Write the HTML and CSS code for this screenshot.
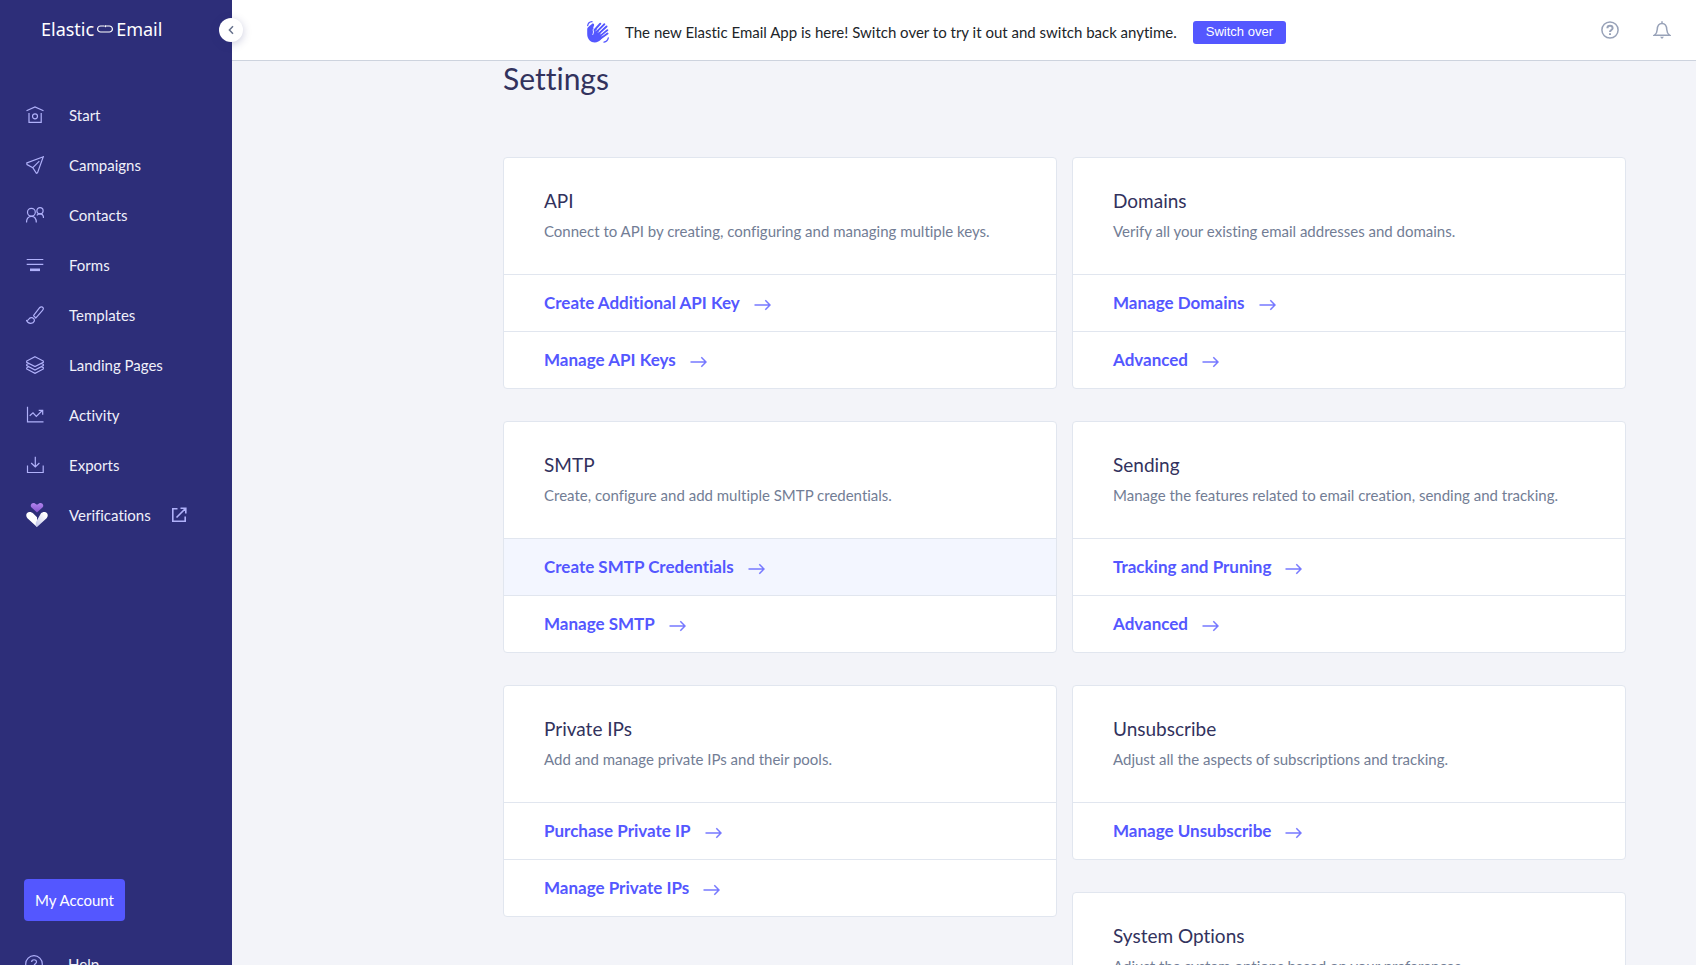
FILE: index.html
```html
<!DOCTYPE html>
<html lang="en">
<head>
<meta charset="utf-8">
<title>Settings - Elastic Email</title>
<link rel="stylesheet" href="styles.css">
</head>
<body>
<svg class="sprite" aria-hidden="true">
  <symbol id="arrow" viewBox="0 0 17 12"><path d="M.5 6h15.500M11.300 1.200 16 6l-4.700 4.800"/></symbol>
</svg>
<div class="app">
  <aside class="sidebar">
    <a class="logo" href="#" aria-label="Elastic Email">
      <span>Elastic</span>
      <svg width="16" height="8" viewBox="0 0 16 8" fill="none" stroke="currentColor" stroke-width="1.200"><path d="M7 1H3.600a3 3 0 0 0 0 6h8.800a3 3 0 0 0 0-6H9"/><path d="M9 0v2.400L6.800 1z" fill="currentColor" stroke="none"/></svg>
      <span>Email</span>
    </a>
    <button class="collapse" type="button" aria-label="Collapse menu"><svg width="6" height="10" viewBox="0 0 6 10" fill="none" stroke="currentColor" stroke-width="1.500"><path d="M5 1.200 1.400 5 5 8.800"/></svg></button>
    <nav class="nav">
      <a href="#"><svg class="icon" viewBox="0 0 18 18"><path d="M.5 4.800 9 1l8.500 3.800M3 7v9.300h12.200V7"/><circle cx="9" cy="10.300" r="2.500"/></svg>Start</a>
      <a href="#"><svg class="icon" viewBox="0 0 18 18"><path d="M17.300.7.800 7l.2 1.500 5.800 3.200 3.600 5.600 1.100-.4zM6.800 11.700l6.500-6.500"/></svg>Campaigns</a>
      <a href="#"><svg class="icon" viewBox="0 0 18 18"><circle cx="5.400" cy="6.300" r="3.900"/><path d="M.5 16.500c0-4 2-6.200 4.900-6.200s4.900 2.200 4.900 6.200"/><circle cx="14" cy="4.700" r="3.100"/><path d="M10.800 9.400c.8-1.100 1.900-1.600 3.200-1.600 2.400 0 3.500 1.700 3.500 4.200"/></svg>Contacts</a>
      <a href="#"><svg class="icon" viewBox="0 0 18 18"><path d="M.7 3.500h16.600M.7 8.300h16.600"/><path d="M4 13.800h10" stroke-width="2.600"/></svg>Forms</a>
      <a href="#"><svg class="icon" viewBox="0 0 18 18"><path d="M7.300 9.800 13.800 1.500c1-1.200 3.300-.8 3.600 1-.1.700-.3 1.300-.9 1.900L9.500 12.300M7.300 9.800c1.200.4 1.900 1.200 2.200 2.500"/><path d="M.6 14.500c2.400.2 1.800-2.600 4.500-2.900 2.200-.2 3.800 1.800 3.100 3.700-1 2.800-6.200 3-7.600-.8z"/></svg>Templates</a>
      <a href="#"><svg class="icon" viewBox="0 0 18 18"><path d="M9 .7 17.300 5v1.300L9 10.600.7 6.300V5zM.7 8.300v1.300L9 14l8.300-4.400V8.300L15.500 7.500M2.500 7.500.7 8.300M.7 11.700V13L9 17.400l8.300-4.400v-1.300l-1.800-.9M2.500 10.800l-1.800.9"/></svg>Landing Pages</a>
      <a href="#"><svg class="icon" viewBox="0 0 18 18"><path d="M1.500.8v15h16M3.700 9.800l3.300-3 3.300 3.700 6-6M12.700 4.300h4v4.500"/></svg>Activity</a>
      <a href="#"><svg class="icon" viewBox="0 0 18 18"><path d="M1.500 9.500v7h15.700v-7M9.300.8v10M5.200 7l4.100 4 4.100-4"/></svg>Exports</a>
      <a href="#"><svg class="verify" viewBox="0 0 22 24"><defs><linearGradient id="heartPurple" x1="0" y1="0" x2="0" y2="1"><stop offset="0" stop-color="#b184ee"/><stop offset="1" stop-color="#8454cc"/></linearGradient><linearGradient id="leafShade" x1="0" y1="1" x2="1" y2="0"><stop offset="0" stop-color="#bfc3ea"/><stop offset=".8" stop-color="#fff"/></linearGradient></defs><path d="M11 9.500 5.300 4.200C3.500 2 6.200-1 9 .4l2 1.300 2-1.300c2.800-1.400 5.500 1.600 3.700 3.800z" fill="url(#heartPurple)"/><path d="M11 24 1.400 15.200C-.6 13 0 9.500 3 9c1.700-.3 3 .3 4 1.300l4 4z" fill="#fff"/><path d="M11 24c-1.500-1.500-1.800-4-.5-6l4.500-7.700c1-1 2.300-1.600 4-1.300 3 .5 3.600 4 1.600 6.200z" fill="url(#leafShade)"/></svg>Verifications<svg class="external" viewBox="0 0 16 16"><path d="M6.500 1.800H1.800v12.400h12.400V9.500M9.500 1.200h5.300v5.300M14.500 1.500 5.500 10.500"/></svg></a>
    </nav>
    <div class="account">
      <button class="account-button" type="button">My Account</button>
      <a class="help" href="#"><svg class="icon" viewBox="0 0 18 18"><circle cx="9" cy="9" r="8.300"/><path d="M6.600 7c0-3 4.900-3 4.900 0 0 1.700-2.500 1.800-2.500 4M9 12.500V14"/></svg>Help</a>
    </div>
  </aside>

  <div class="page">
    <header class="topbar">
      <div class="banner">
        <svg width="22" height="22" viewBox="0 0 22 22" fill="none" stroke="#5457ff" stroke-linecap="round"><path d="M.2 13V8.500C.2 7 .8 6.300 1.800 5.400L4.900 2.900C6.300 2 7.700 3.400 6.900 4.800L6 7.500l2.500-.5 7.500 7.500-1.500 3.300C9.500 24.500.2 21.500.2 13z" fill="#5457ff" stroke="none"/><path d="M8 8.500 13.300 2.700M9.500 11l7.800-7.800M11.500 13l8-7.500M13.500 15l6.800-5.800M13.500 17.500l7-5" stroke-width="2"/><path d="m8.700 10 7.300-7.300M11.200 11.500l7-7M13.200 13.200l6.700-5.900M14.800 15l5.700-4.400" stroke="#fff" stroke-width=".6"/><path d="M5.800 13.500c1-2 .8-3.200.2-4.600L7.500 7" stroke="#fff" stroke-width=".9"/><path d="M.7 4.500C1 2.500 2.500 1 5 .7M17 21.200c2.200-.4 3.800-1.800 4.300-4.300" stroke-width="1.300"/></svg>
        <span>The new Elastic Email App is here! Switch over to try it out and switch back anytime.</span>
        <button class="switch" type="button">Switch over</button>
      </div>
      <div class="tools">
        <button type="button" aria-label="Help"><svg width="18" height="18" viewBox="0 0 18 18" fill="none" stroke="currentColor" stroke-width="1.500"><circle cx="9" cy="9" r="8.100"/><path d="M6.400 7.200c0-3.200 5.200-3.200 5.200 0C11.600 9 9 9 9 11M9 12.200V14" stroke-width="2"/></svg></button>
        <button type="button" aria-label="Notifications"><svg width="18" height="18" viewBox="0 0 18 18" fill="none" stroke="currentColor" stroke-width="1.500"><path d="M1.500 14.200h15c-2-1.300-2.500-2.500-2.700-5.500C13.600 4.500 12 2.500 9 2.500S4.400 4.500 4.200 8.700c-.2 3-.7 4.200-2.700 5.500zM9 .3v2"/><path d="M7 15.800h4L9 18z" fill="currentColor" stroke="none"/></svg></button>
      </div>
    </header>
    <main class="content">
      <h1>Settings</h1>
      <div class="columns">
        <div class="column">
          <section class="card">
            <div class="card-head"><h2>API</h2><p>Connect to API by creating, configuring and managing multiple keys.</p></div>
            <a href="#">Create Additional API Key<svg class="arrow"><use href="#arrow"/></svg></a>
            <a href="#">Manage API Keys<svg class="arrow"><use href="#arrow"/></svg></a>
          </section>
          <section class="card">
            <div class="card-head"><h2>SMTP</h2><p>Create, configure and add multiple SMTP credentials.</p></div>
            <a class="active" href="#">Create SMTP Credentials<svg class="arrow"><use href="#arrow"/></svg></a>
            <a href="#">Manage SMTP<svg class="arrow"><use href="#arrow"/></svg></a>
          </section>
          <section class="card">
            <div class="card-head"><h2>Private IPs</h2><p>Add and manage private IPs and their pools.</p></div>
            <a href="#">Purchase Private IP<svg class="arrow"><use href="#arrow"/></svg></a>
            <a href="#">Manage Private IPs<svg class="arrow"><use href="#arrow"/></svg></a>
          </section>
        </div>
        <div class="column">
          <section class="card">
            <div class="card-head"><h2>Domains</h2><p>Verify all your existing email addresses and domains.</p></div>
            <a href="#">Manage Domains<svg class="arrow"><use href="#arrow"/></svg></a>
            <a href="#">Advanced<svg class="arrow"><use href="#arrow"/></svg></a>
          </section>
          <section class="card">
            <div class="card-head"><h2>Sending</h2><p>Manage the features related to email creation, sending and tracking.</p></div>
            <a href="#">Tracking and Pruning<svg class="arrow"><use href="#arrow"/></svg></a>
            <a href="#">Advanced<svg class="arrow"><use href="#arrow"/></svg></a>
          </section>
          <section class="card">
            <div class="card-head"><h2>Unsubscribe</h2><p>Adjust all the aspects of subscriptions and tracking.</p></div>
            <a href="#">Manage Unsubscribe<svg class="arrow"><use href="#arrow"/></svg></a>
          </section>
          <section class="card">
            <div class="card-head"><h2>System Options</h2><p>Adjust the system options based on your preferences.</p></div>
          </section>
        </div>
      </div>
    </main>
  </div>
</div>
</body>
</html>
```
FILE: styles.css
```css
* { box-sizing: border-box; }

body {
  margin: 0;
  font-family: Lato, "Open Sans", sans-serif;
  font-size: 15px;
  font-variant-ligatures: none;
  line-height: 20px;
  color: #32325d;
  background: #f3f4f9;
}

a { color: inherit; text-decoration: none; }
button { font: inherit; border: 0; padding: 0; cursor: pointer; }
svg { flex: none; }
h1, h2, p { margin: 0; font-weight: 400; }

.sprite { position: absolute; width: 0; height: 0; }

.app { display: flex; height: 100vh; overflow: hidden; }

/* Sidebar */
.sidebar {
  position: relative;
  z-index: 1;
  flex: none;
  display: flex;
  flex-direction: column;
  width: 232px;
  background: #2d2e79;
  color: #f0f0fa;
}

.logo {
  display: flex;
  align-items: center;
  gap: 3px;
  height: 58px;
  padding-left: 41px;
  font-family: "Noto Sans", sans-serif;
  font-size: 18px;
  color: #fff;
}

.collapse {
  position: absolute;
  top: 18px;
  right: -11px;
  display: flex;
  align-items: center;
  justify-content: center;
  width: 24px;
  height: 24px;
  border-radius: 50%;
  background: #fff;
  color: #66718c;
  box-shadow: 0 2px 8px rgba(45, 46, 121, .25);
}

.nav { display: flex; flex-direction: column; padding: 32px 0 0 26px; }
.nav a { display: flex; align-items: center; height: 50px; }

.icon {
  width: 18px;
  height: 18px;
  margin-right: 25px;
  fill: none;
  stroke: #b0b1fa;
  stroke-width: 1.2;
}

.verify { width: 22px; height: 24px; margin-right: 21px; }

.external {
  width: 16px;
  height: 16px;
  margin-left: 20px;
  fill: none;
  stroke: #b0b1fa;
  stroke-width: 1.6;
}

.account { margin-top: auto; padding-left: 24px; }

.account-button {
  display: block;
  height: 42px;
  padding: 0 11px;
  border-radius: 4px;
  background: #5457ff;
  color: #fff;
}

.help { display: flex; align-items: center; height: 20px; margin: 33px 0 -9px; padding-left: 1px; }

/* Main area */
.page { flex: 1; display: flex; flex-direction: column; min-width: 0; }

.topbar {
  flex: none;
  display: flex;
  align-items: center;
  height: 61px;
  padding-right: 25px;
  border-bottom: 1px solid #cdd3de;
  background: #fff;
  color: #212529;
}

.banner {
  flex: 1;
  display: flex;
  align-items: center;
  justify-content: center;
  gap: 16px;
  padding: 4px 0 0 40px;
}

.switch {
  height: 23px;
  padding: 0 13px;
  border-radius: 3px;
  background: #5457ff;
  color: #fff;
  font-family: "Liberation Sans", sans-serif;
  font-size: 13px;
}

.tools { display: flex; gap: 34px; }
.tools button { display: flex; background: none; color: #98a2b8; }

.content { flex: 1; min-height: 0; overflow: hidden; padding: 0 70px 0 271px; }

h1 { font-size: 30px; line-height: 34px; margin-bottom: 62px; }

.columns { display: grid; grid-template-columns: 1fr 1fr; gap: 15px; align-items: start; }
.column { display: flex; flex-direction: column; gap: 32px; }

.card {
  border: 1px solid #e1e6ef;
  border-radius: 4px;
  background: #fff;
  overflow: hidden;
}

.card-head { padding: 31px 40px; height: 116px; }
.card-head h2 { font-size: 19px; line-height: 24px; margin-bottom: 8px; }
.card-head p { color: #727d95; }

.card a {
  display: flex;
  align-items: center;
  gap: 14px;
  height: 57px;
  padding-left: 40px;
  border-top: 1px solid #e1e6ef;
  font-size: 17px;
  font-weight: 700;
  color: #5457ff;
}

.card a.active, .card a:hover { background: #f3f6ff; }

.arrow {
  width: 17px;
  height: 12px;
  margin-top: 4px;
  fill: none;
  stroke: #7779ff;
  stroke-width: 1.5;
}
```
